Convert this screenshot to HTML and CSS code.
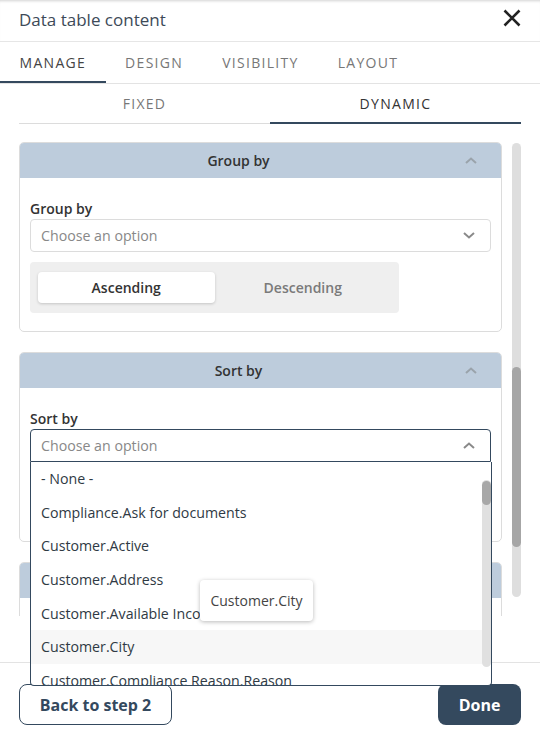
FILE: index.html
```html
<!DOCTYPE html>
<html lang="en">
    <head>
        <meta charset="UTF-8">
        <meta name="viewport" content="width=device-width, initial-scale=1.0">
        <link rel="stylesheet" href="styles.css">
        <title>Data table content</title>
    </head>
    <body>
        <div class="dialog">
            <div class="dialog-head">
                <h1 class="dialog-title">Data table content</h1>
                <button class="close-button" aria-label="Close">
                    <svg width="18" height="18" viewBox="0 0 18 18"><path d="M1.5 1.5 L16.5 16.5 M16.5 1.5 L1.5 16.5" stroke="#222" stroke-width="2.6" fill="none"/></svg>
                </button>
            </div>

            <nav class="tabs">
                <a class="tab active" href="#">MANAGE</a>
                <a class="tab" href="#">DESIGN</a>
                <a class="tab" href="#">VISIBILITY</a>
                <a class="tab" href="#">LAYOUT</a>
            </nav>

            <div class="subtabs">
                <a class="subtab" href="#">FIXED</a>
                <a class="subtab active" href="#">DYNAMIC</a>
            </div>

            <div class="scroll-area">
                <div class="scroll-content">
                    <div class="card">
                        <div class="card-head">
                            <span class="card-title">Group by</span>
                            <svg class="chevron" width="12" height="7" viewBox="0 0 12 7"><path d="M1 6 L6 1.5 L11 6" stroke="#9aa3ab" stroke-width="2" fill="none"/></svg>
                        </div>
                        <div class="card-body">
                            <label class="field-label">Group by</label>
                            <div class="select">
                                <span class="placeholder">Choose an option</span>
                                <svg width="12" height="7" viewBox="0 0 12 7"><path d="M1 1 L6 5.5 L11 1" stroke="#8a8a8a" stroke-width="2" fill="none"/></svg>
                            </div>
                            <div class="segmented">
                                <button class="segment selected">Ascending</button>
                                <button class="segment">Descending</button>
                            </div>
                        </div>
                    </div>

                    <div class="card">
                        <div class="card-head">
                            <span class="card-title">Sort by</span>
                            <svg class="chevron" width="12" height="7" viewBox="0 0 12 7"><path d="M1 6 L6 1.5 L11 6" stroke="#9aa3ab" stroke-width="2" fill="none"/></svg>
                        </div>
                        <div class="card-body">
                            <label class="field-label">Sort by</label>
                            <div class="select open">
                                <span class="placeholder">Choose an option</span>
                                <svg width="12" height="7" viewBox="0 0 12 7"><path d="M1 6 L6 1.5 L11 6" stroke="#8a8a8a" stroke-width="2" fill="none"/></svg>
                            </div>
                            <div class="segmented">
                                <button class="segment selected">Ascending</button>
                                <button class="segment">Descending</button>
                            </div>
                        </div>
                    </div>

                    <div class="card">
                        <div class="card-head">
                            <span class="card-title">Paging</span>
                            <svg class="chevron" width="12" height="7" viewBox="0 0 12 7"><path d="M1 6 L6 1.5 L11 6" stroke="#9aa3ab" stroke-width="2" fill="none"/></svg>
                        </div>
                        <div class="card-body">
                            <label class="field-label">Rows per page</label>
                            <div class="select">
                                <span class="placeholder">Choose an option</span>
                            </div>
                        </div>
                    </div>
                </div>
                <div class="vscroll"><div class="vscroll-thumb"></div></div>
            </div>

            <div class="dialog-foot">
                <button class="btn-outline">Back to step 2</button>
                <button class="btn-primary">Done</button>
            </div>
        </div>

        <div class="dropdown">
            <ul class="options">
                <li>- None -</li>
                <li>Compliance.Ask for documents</li>
                <li>Customer.Active</li>
                <li>Customer.Address</li>
                <li>Customer.Available Income</li>
                <li class="hover">Customer.City</li>
                <li>Customer.Compliance Reason.Reason</li>
                <li>Customer.Country</li>
            </ul>
            <div class="dropdown-scroll"><div class="dropdown-thumb"></div></div>
        </div>

        <div class="tooltip">Customer.City</div>
    </body>
</html>
```

FILE: styles.css
```css
body,
html {
    margin: 0;
    width: 540px;
    height: 745px;
    overflow: hidden;
    background: #fff;
    font-family: "Open Sans", Arial, sans-serif;
    position: relative;
}

button {
    font-family: inherit;
    cursor: pointer;
}

.dialog {
    display: flex;
    flex-direction: column;
    height: 745px;
}

.dialog-head {
    display: flex;
    align-items: center;
    justify-content: space-between;
    height: 42px;
    padding: 0 19px 3px 19px;
    box-sizing: border-box;
    border-bottom: 1px solid #e6e6e6;
    box-shadow: inset 0 3px 3px -2px rgba(0, 0, 0, 0.18);
}

.dialog-title {
    margin: 0;
    font-size: 17px;
    font-weight: 400;
    color: #3d4a58;
}

.close-button {
    border: none;
    background: none;
    padding: 0;
    display: flex;
    margin-bottom: 3px;
}

.tabs {
    display: flex;
    border-bottom: 1px solid #e3e3e3;
}

.tab {
    height: 41px;
    box-sizing: border-box;
    padding: 2px 19.5px 0 19.5px;
    display: flex;
    align-items: center;
    font-size: 14px;
    letter-spacing: 1.3px;
    color: #777;
    text-decoration: none;
    border-bottom: 2px solid transparent;
}

.tab.active {
    color: #444;
    border-bottom-color: #34495e;
}

.subtabs {
    display: flex;
    margin: 0 19px;
}

.subtab {
    flex: 1;
    height: 40px;
    box-sizing: border-box;
    display: flex;
    align-items: center;
    justify-content: center;
    font-size: 14px;
    letter-spacing: 1.3px;
    color: #777;
    text-decoration: none;
    border-bottom: 1px solid #dcdcdc;
}

.subtab.active {
    color: #333;
    border-bottom: 2px solid #34495e;
}

.scroll-area {
    flex: 1;
    display: flex;
    margin-bottom: 46px;
    padding: 0 19px;
    min-height: 0;
}

.scroll-content {
    flex: 1;
    overflow: hidden;
    padding-top: 18px;
}

.vscroll {
    width: 9px;
    margin: 19px 0 19px 10px;
    background: #dedede;
    border-radius: 5px;
    position: relative;
}

.vscroll-thumb {
    position: absolute;
    left: 0;
    right: 0;
    top: 224px;
    height: 180px;
    background: #a6a6a6;
    border-radius: 5px;
}

.card {
    border: 1px solid #dcdcdc;
    border-radius: 5px;
    overflow: hidden;
    margin-bottom: 20px;
}

.card-head {
    display: flex;
    align-items: center;
    height: 35px;
    background: #bdccdc;
    padding-right: 24px;
}

.card-title {
    flex: 1;
    text-align: center;
    font-size: 14px;
    font-weight: 600;
    color: #333;
    padding-bottom: 1px;
}

.chevron {
    margin-left: 8px;
}

.card-body {
    padding: 21px 10px 18px 10px;
}

.field-label {
    display: block;
    font-size: 14px;
    font-weight: 600;
    line-height: 20px;
    color: #333;
}

.select {
    display: flex;
    align-items: center;
    justify-content: space-between;
    height: 33px;
    box-sizing: border-box;
    border: 1px solid #dcdcdc;
    border-radius: 4px;
    padding: 0 15px 0 10px;
}

.select.open {
    border-color: #34495e;
    border-radius: 4px 4px 0 0;
}

.placeholder {
    font-size: 14.2px;
    color: #888;
}

.segmented {
    display: flex;
    width: 369px;
    box-sizing: border-box;
    margin-top: 10px;
    padding: 10px 8px;
    background: #efefef;
    border-radius: 4px;
}

.segment {
    flex: 1;
    height: 31px;
    border: none;
    background: transparent;
    border-radius: 4px;
    font-size: 14px;
    font-weight: 600;
    color: #7a7a7a;
}

.segment.selected {
    background: #fff;
    color: #333;
    box-shadow: 0 1px 3px rgba(0, 0, 0, 0.18);
}

.dialog-foot {
    display: flex;
    justify-content: space-between;
    border-top: 1px solid #e3e3e3;
    padding: 21px 19px 20px 19px;
}

.btn-outline,
.btn-primary {
    height: 41px;
    border-radius: 8px;
    font-size: 16px;
    font-weight: 700;
}

.btn-outline {
    width: 153px;
    background: #fff;
    color: #34495e;
    border: 1px solid #34495e;
}

.btn-primary {
    width: 83px;
    background: #34495e;
    color: #fff;
    border: none;
}

.dropdown {
    position: absolute;
    left: 30px;
    top: 462px;
    width: 462px;
    height: 224px;
    box-sizing: border-box;
    background: #fff;
    border: 1px solid #34495e;
    border-top: none;
    border-radius: 0 0 4px 4px;
    display: flex;
    overflow: hidden;
    z-index: 2;
}

.options {
    flex: 1;
    list-style: none;
    margin: 0;
    padding: 0;
}

.options li {
    height: 33.6px;
    display: flex;
    align-items: center;
    padding-left: 10px;
    font-size: 14.2px;
    color: #2f3a44;
    white-space: nowrap;
}

.options li.hover {
    background: #f7f7f7;
}

.dropdown-scroll {
    width: 9px;
    margin: 18px 0 18px 0;
    background: #e0e0e0;
    border-radius: 5px;
    position: relative;
}

.dropdown-thumb {
    position: absolute;
    left: 0;
    right: 0;
    top: 1px;
    height: 24px;
    background: #a8a8a8;
    border-radius: 5px;
}

.tooltip {
    position: absolute;
    left: 200px;
    top: 580px;
    width: 113px;
    height: 41px;
    box-sizing: border-box;
    display: flex;
    align-items: center;
    justify-content: center;
    background: #fff;
    border-radius: 4px;
    box-shadow: 0 1px 4px rgba(0, 0, 0, 0.28);
    font-size: 14px;
    color: #444;
    z-index: 3;
}
```
